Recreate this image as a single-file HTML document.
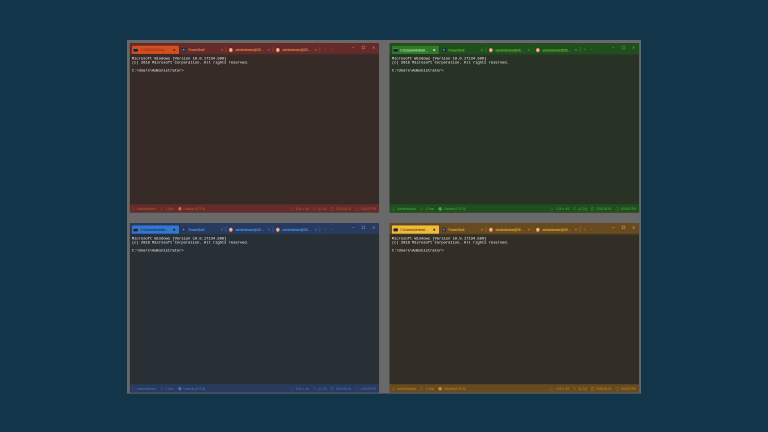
<!DOCTYPE html>
<html><head><meta charset="utf-8"><title>Terminals</title>
<style>
html,body{margin:0;padding:0;background:#13354a;overflow:hidden}
body{width:768px;height:432px;position:relative}
#stage{position:absolute;left:0;top:0;width:1536px;height:864px;transform:scale(.5);transform-origin:0 0;will-change:transform;background:#13354a}
#inner{position:absolute;left:0;top:0;width:1920px;height:1080px;transform:scale(.8);transform-origin:0 0;font-family:"Liberation Sans",sans-serif}
#panel{position:absolute;left:0;top:0;transform:translate(317.5px,99.9px);width:1285px;height:884px;background:#696969}
.win{position:absolute;left:0;top:0;height:424px;background:var(--body);overflow:hidden}
.bar{position:absolute;left:0;top:0;width:100%;height:31px}
.bar:before{content:"";position:absolute;left:0;top:0;width:100%;height:27px;background:var(--bar)}
.bar:after{content:"";position:absolute;left:0;top:27px;width:100%;height:4px;background:linear-gradient(var(--bar),transparent);opacity:.55}
.tab{position:absolute;left:0;top:0;width:117.5px;height:21px;border-radius:2.5px 2.5px 1px 1px;color:var(--fg);font-size:8.3px;letter-spacing:-.25px;line-height:21px;text-shadow:0 0 1px currentColor}
.tab.act{box-shadow:0 0 2.5px rgba(0,0,0,.35);background:var(--tab);color:var(--tabfg);text-shadow:0 0 .6px currentColor}
.tab .tt{position:absolute;left:24px;top:1px;width:74px;white-space:nowrap;overflow:hidden;text-overflow:ellipsis}
.tab.act .tt{left:20.5px;width:72px}
.tab .cx{position:absolute;left:104px;top:7.5px;width:7px;height:7px;--c:var(--fg)}
.tab .cx:before,.tab .cx:after{content:"";position:absolute;left:.25px;top:2.9px;width:6.5px;height:1.2px;background:var(--c);opacity:.85;transform:rotate(45deg)}
.tab .cx:after{transform:rotate(-45deg)}
.tab.act .cx{left:102.5px;--c:var(--cx)}
.tab.act .cx:before,.tab.act .cx:after{height:1.5px;width:5.6px;left:.7px;top:2.75px;opacity:1}
.ic{position:absolute;left:8px;top:6px;width:9px;height:9px;border-radius:1px}
.ic.cmd{background:#1e2230;border-top:2.5px solid #9ca0ac;box-sizing:border-box;width:11.25px;height:8.5px;left:3.75px;top:6.3px}
.ic.ps{background:radial-gradient(circle at 45% 50%,#90a6c6 0,#4a6894 30%,#141e38 62%);width:8.4px;height:8.4px;left:8.3px;top:6.3px;border-radius:1.5px}
.ic.ub{background:radial-gradient(circle at 50% 50%,#fcc4a0 0,#f6a878 45%,#ea8854 80%,#dc7040 100%);border-radius:50%;width:9px;height:10px;left:7.8px;top:5.5px}
.sep{position:absolute;top:9px;width:1.8px;margin-left:-.3px;height:14px;background:var(--sep)}
.plus{position:absolute;left:483.5px;top:7px;width:10px;text-align:center;font-size:11px;line-height:18px;color:var(--dim)}
.chev{position:absolute;left:500.5px;top:5px;width:10px;text-align:center;font-size:10px;line-height:18px;color:var(--dim)}
.wb{position:absolute;top:0;width:26px;height:22px;color:var(--wb);font-size:10.5px;line-height:23px;text-align:center}
.wb.min{right:52.5px}.wb.min:after{content:"";position:absolute;left:10.5px;top:10.5px;width:6.5px;height:1.7px;background:var(--wb);opacity:.9}
.wb.max{right:26.5px}.wb.max:after{content:"";position:absolute;left:9px;top:7px;width:8px;height:8px;border:1.4px solid var(--wb);box-sizing:border-box}
.wb.cls{right:.5px}
.term{position:absolute;left:4.3px;top:34.25px;margin:0;font-family:"Liberation Mono",monospace;font-size:9.4px;line-height:10px;color:#e0e0e0;text-shadow:0 0 1px rgba(255,255,255,.35)}
.status{position:absolute;left:0;top:403px;width:100%;height:21px;background:var(--bar);color:var(--dim);font-size:8px;line-height:21.5px;text-shadow:0 0 .8px var(--dimsh)}
.si{position:absolute;top:7.5px;width:7px;height:8px;border:1.2px solid var(--dim);box-sizing:border-box;border-radius:2px;opacity:.6}
.si.g{border-radius:50%;background:var(--gl);border-color:var(--gl);width:8.6px;height:8.6px;top:7.2px;opacity:1}
.si.p{border-width:1.3px 0;border-radius:0;width:6px;height:5px;top:9px;margin-left:.5px;opacity:.7}
.si.k{border-radius:50%;width:8px}
.si.c{border-top-width:2.6px;border-radius:1px;width:7.5px;opacity:.75}
.si.u{border-radius:3px 3px 1px 1px;width:6px;margin-left:.5px}
.si.s{transform:rotate(45deg);width:6.5px;height:6.5px;top:8.5px}
.si.f{border-width:1.2px 1.2px 1.2px 1.6px;height:6px;border-radius:0}
.st{position:absolute;top:1.2px;white-space:nowrap}
.red{--bar:#632b2a;--tab:#d44f20;--body:#362a27;--fg:#dc7a48;--tabfg:#96380f;--dim:#a8563a;--dimsh:rgba(168,86,58,.5);--cx:#5a200a;--gl:#c87048;--sep:#9c4226;--wb:#d88858}
.green{--bar:#214e1e;--tab:#2f7a28;--body:#283326;--fg:#58b038;--tabfg:#a8dc98;--dim:#44a030;--dimsh:rgba(68,160,48,.5);--cx:#c4eabc;--gl:#48a834;--sep:#2f7a28;--wb:#50ac3a}
.blue{--bar:#283a5d;--tab:#3277d0;--body:#283036;--fg:#4a8ee0;--tabfg:#1e3a70;--dim:#416fbc;--dimsh:rgba(65,111,188,.5);--cx:#10204a;--gl:#4274c0;--sep:#3a5a9a;--wb:#5a9ae8}
.yellow{--bar:#684a20;--tab:#f2ba3a;--body:#322e26;--fg:#d2a230;--tabfg:#7a5c18;--dim:#ac8628;--dimsh:rgba(172,134,40,.4);--cx:#3a2a08;--gl:#bc9230;--sep:#8a6a28;--wb:#e8b840}
</style></head>
<body><div id="stage"><div id="inner"><div id="panel"></div>
<div class="win red" style="transform:translate(324.6px,107.6px);width:623px">
<div class="bar">
<div class="tab act" style="transform:translate(5.0px,6.4px)"><i class="ic cmd"></i><span class="tt">C:\WINDOWS\system32\cmd.exe</span><span class="cx"></span></div>
<div class="tab" style="transform:translate(122.5px,6.4px)"><i class="ic ps"></i><span class="tt">PowerShell</span><span class="cx"></span></div>
<div class="tab" style="transform:translate(240.0px,6.4px)"><i class="ic ub"></i><span class="tt">administrator@DES...</span><span class="cx"></span></div>
<div class="tab" style="transform:translate(357.5px,6.4px)"><i class="ic ub"></i><span class="tt">administrator@DES...</span><span class="cx"></span></div>
<b class="sep" style="left:239.5px"></b>
<b class="sep" style="left:357.0px"></b>
<b class="sep" style="left:474.5px"></b>
<span class="plus">+</span><span class="chev">⌄</span>
<span class="wb min"></span><span class="wb max"></span><span class="wb cls">✕</span>
</div>
<pre class="term" style="left:5.2px">Microsoft Windows [Version 10.0.17134.590]
(c) 2018 Microsoft Corporation. All rights reserved.

C:\Users\Administrator&gt;</pre>
<div class="status">
<i class="si u" style="left:4.75px"></i><span class="st" style="left:17.00px;letter-spacing:0.07px">Administrator</span>
<i class="si p" style="left:75.00px"></i><span class="st" style="left:88.25px;letter-spacing:-0.06px">1.2ms</span>
<i class="si g" style="left:120.50px"></i><span class="st" style="left:134.25px;letter-spacing:-0.37px">Unicode (UTF-8)</span>
<i class="si s" style="left:400.50px"></i><span class="st" style="left:414.40px;letter-spacing:0.32px">104 x 46</span>
<i class="si f" style="left:457.75px"></i><span class="st" style="left:470.60px;letter-spacing:-0.30px">(4, 24)</span>
<i class="si c" style="left:502.10px"></i><span class="st" style="left:515.00px;letter-spacing:-0.29px">2019-04-01</span>
<i class="si k" style="left:563.75px"></i><span class="st" style="left:576.90px;letter-spacing:-0.72px">10:00:07 PM</span>
</div></div>
<div class="win green" style="transform:translate(973.8px,107.8px);width:624px">
<div class="bar">
<div class="tab act" style="transform:translate(5.9px,6.4px)"><i class="ic cmd"></i><span class="tt">C:\Users\Administrator</span><span class="cx"></span></div>
<div class="tab" style="transform:translate(123.4px,6.4px)"><i class="ic ps"></i><span class="tt">PowerShell</span><span class="cx"></span></div>
<div class="tab" style="transform:translate(240.9px,6.4px)"><i class="ic ub"></i><span class="tt">administrator@DES...</span><span class="cx"></span></div>
<div class="tab" style="transform:translate(358.4px,6.4px)"><i class="ic ub"></i><span class="tt">administrator@DES...</span><span class="cx"></span></div>
<b class="sep" style="left:240.4px"></b>
<b class="sep" style="left:357.9px"></b>
<b class="sep" style="left:475.4px"></b>
<span class="plus">+</span><span class="chev">⌄</span>
<span class="wb min"></span><span class="wb max"></span><span class="wb cls">✕</span>
</div>
<pre class="term" style="left:5.8px">Microsoft Windows [Version 10.0.17134.590]
(c) 2018 Microsoft Corporation. All rights reserved.

C:\Users\Administrator&gt;</pre>
<div class="status">
<i class="si u" style="left:6.35px"></i><span class="st" style="left:18.60px;letter-spacing:0.07px">Administrator</span>
<i class="si p" style="left:76.60px"></i><span class="st" style="left:89.85px;letter-spacing:-0.06px">1.2ms</span>
<i class="si g" style="left:122.10px"></i><span class="st" style="left:135.85px;letter-spacing:-0.37px">Unicode (UTF-8)</span>
<i class="si s" style="left:402.10px"></i><span class="st" style="left:416.00px;letter-spacing:0.32px">104 x 46</span>
<i class="si f" style="left:459.35px"></i><span class="st" style="left:472.20px;letter-spacing:-0.30px">(4, 24)</span>
<i class="si c" style="left:503.70px"></i><span class="st" style="left:516.60px;letter-spacing:-0.29px">2019-04-01</span>
<i class="si k" style="left:565.35px"></i><span class="st" style="left:578.50px;letter-spacing:-0.72px">10:00:07 PM</span>
</div></div>
<div class="win blue" style="transform:translate(324.6px,557.5px);width:623px">
<div class="bar">
<div class="tab act" style="transform:translate(5.0px,5.9px)"><i class="ic cmd"></i><span class="tt">C:\Users\Administrator</span><span class="cx"></span></div>
<div class="tab" style="transform:translate(122.5px,5.9px)"><i class="ic ps"></i><span class="tt">PowerShell</span><span class="cx"></span></div>
<div class="tab" style="transform:translate(240.0px,5.9px)"><i class="ic ub"></i><span class="tt">administrator@DES...</span><span class="cx"></span></div>
<div class="tab" style="transform:translate(357.5px,5.9px)"><i class="ic ub"></i><span class="tt">administrator@DES...</span><span class="cx"></span></div>
<b class="sep" style="left:239.5px"></b>
<b class="sep" style="left:357.0px"></b>
<b class="sep" style="left:474.5px"></b>
<span class="plus">+</span><span class="chev">⌄</span>
<span class="wb min"></span><span class="wb max"></span><span class="wb cls">✕</span>
</div>
<pre class="term" style="left:5.2px">Microsoft Windows [Version 10.0.17134.590]
(c) 2018 Microsoft Corporation. All rights reserved.

C:\Users\Administrator&gt;</pre>
<div class="status">
<i class="si u" style="left:4.75px"></i><span class="st" style="left:17.00px;letter-spacing:0.07px">Administrator</span>
<i class="si p" style="left:75.00px"></i><span class="st" style="left:88.25px;letter-spacing:-0.06px">1.2ms</span>
<i class="si g" style="left:120.50px"></i><span class="st" style="left:134.25px;letter-spacing:-0.37px">Unicode (UTF-8)</span>
<i class="si s" style="left:400.50px"></i><span class="st" style="left:414.40px;letter-spacing:0.32px">104 x 46</span>
<i class="si f" style="left:457.75px"></i><span class="st" style="left:470.60px;letter-spacing:-0.30px">(4, 24)</span>
<i class="si c" style="left:502.10px"></i><span class="st" style="left:515.00px;letter-spacing:-0.29px">2019-04-01</span>
<i class="si k" style="left:563.75px"></i><span class="st" style="left:576.90px;letter-spacing:-0.72px">10:00:07 PM</span>
</div></div>
<div class="win yellow" style="transform:translate(973.8px,557.5px);width:624px">
<div class="bar">
<div class="tab act" style="transform:translate(5.9px,5.9px)"><i class="ic cmd"></i><span class="tt">C:\Users\Administrator</span><span class="cx"></span></div>
<div class="tab" style="transform:translate(123.4px,5.9px)"><i class="ic ps"></i><span class="tt">PowerShell</span><span class="cx"></span></div>
<div class="tab" style="transform:translate(240.9px,5.9px)"><i class="ic ub"></i><span class="tt">administrator@DES...</span><span class="cx"></span></div>
<div class="tab" style="transform:translate(358.4px,5.9px)"><i class="ic ub"></i><span class="tt">administrator@DES...</span><span class="cx"></span></div>
<b class="sep" style="left:240.4px"></b>
<b class="sep" style="left:357.9px"></b>
<b class="sep" style="left:475.4px"></b>
<span class="plus">+</span><span class="chev">⌄</span>
<span class="wb min"></span><span class="wb max"></span><span class="wb cls">✕</span>
</div>
<pre class="term" style="left:5.8px">Microsoft Windows [Version 10.0.17134.590]
(c) 2018 Microsoft Corporation. All rights reserved.

C:\Users\Administrator&gt;</pre>
<div class="status">
<i class="si u" style="left:6.35px"></i><span class="st" style="left:18.60px;letter-spacing:0.07px">Administrator</span>
<i class="si p" style="left:76.60px"></i><span class="st" style="left:89.85px;letter-spacing:-0.06px">1.2ms</span>
<i class="si g" style="left:122.10px"></i><span class="st" style="left:135.85px;letter-spacing:-0.37px">Unicode (UTF-8)</span>
<i class="si s" style="left:402.10px"></i><span class="st" style="left:416.00px;letter-spacing:0.32px">104 x 46</span>
<i class="si f" style="left:459.35px"></i><span class="st" style="left:472.20px;letter-spacing:-0.30px">(4, 24)</span>
<i class="si c" style="left:503.70px"></i><span class="st" style="left:516.60px;letter-spacing:-0.29px">2019-04-01</span>
<i class="si k" style="left:565.35px"></i><span class="st" style="left:578.50px;letter-spacing:-0.72px">10:00:07 PM</span>
</div></div>
</div></div></body></html>
